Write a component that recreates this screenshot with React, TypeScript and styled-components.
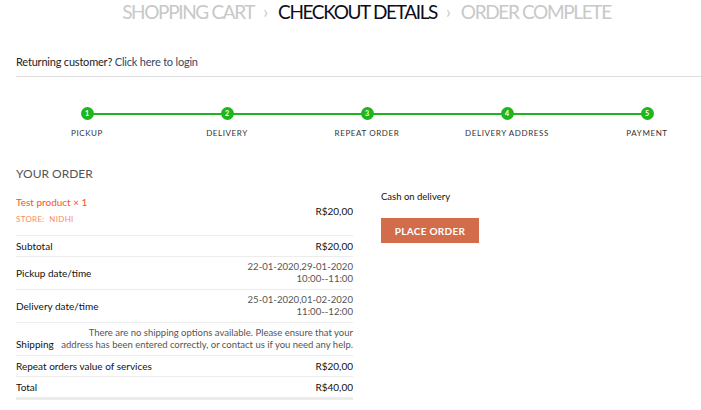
import React from 'react';
import styled, { createGlobalStyle } from 'styled-components';

const Global = createGlobalStyle`
  html, body { margin: 0; padding: 0; background: #fff; overflow: hidden; }
  body { font-family: Lato, "Open Sans", sans-serif; color: #333; }
`;

const Page = styled.div`
  width: 733px;
  box-sizing: border-box;
  padding: 0 16px;
`;

const Breadcrumb = styled.nav`
  display: flex;
  justify-content: center;
  align-items: center;
  font-size: 19px;
  line-height: 24px;
  text-transform: uppercase;
  letter-spacing: -1.35px;
`;

const Crumb = styled.span<{ $active?: boolean }>`
  color: ${(p) => (p.$active ? '#0d0d1a' : '#c8c8c8')};
`;

const Divider = styled.span`
  color: #c8c8c8;
  margin: 0 10px 0 9px;
  font-size: 17px;
  letter-spacing: 0;
`;

const LoginBar = styled.div`
  margin-top: 31px;
  padding-bottom: 7px;
  border-bottom: 1px solid #ddd;
  font-size: 11px;
  line-height: 14px;
  letter-spacing: -0.2px;
  color: #222;
  margin-right: -32px;
`;

const LoginLink = styled.a`
  color: #334862;
  text-decoration: none;
`;

const Steps = styled.ol`
  list-style: none;
  margin: 30px 0 0;
  padding: 0 0 0 1px;
  display: grid;
  grid-template-columns: repeat(5, 140px);
`;

const Step = styled.li<{ $first?: boolean; $last?: boolean }>`
  position: relative;
  display: flex;
  flex-direction: column;
  align-items: center;
  &::before, &::after {
    content: '';
    position: absolute;
    top: 6px;
    height: 1.5px;
    background: #1fb31f;
    width: 50%;
  }
  &::before { left: 0; display: ${(p) => (p.$first ? 'none' : 'block')}; }
  &::after { right: 0; display: ${(p) => (p.$last ? 'none' : 'block')}; }
`;

const Dot = styled.span`
  position: relative;
  z-index: 1;
  width: 13px;
  height: 13px;
  border-radius: 50%;
  background: #1fb51f;
  color: #fff;
  font-size: 7px;
  font-weight: 700;
  line-height: 13px;
  text-align: center;
`;

const StepLabel = styled.span`
  margin-top: 8px;
  font-size: 8px;
  line-height: 10px;
  letter-spacing: 0.6px;
  color: #333;
  text-transform: uppercase;
`;

const Columns = styled.div`
  margin-top: 28px;
  display: grid;
  grid-template-columns: 337px 1fr;
  column-gap: 28px;
`;

const Heading = styled.h3`
  margin: 0;
  font-size: 12px;
  line-height: 16px;
  font-weight: 400;
  color: #555;
  text-transform: uppercase;
`;

const Table = styled.div`
  margin-top: 7px;
  border-bottom: 3px solid #ececec;
  font-size: 10px;
  color: #111;
`;

const Row = styled.div<{ $align?: string }>`
  display: flex;
  justify-content: space-between;
  align-items: ${(p) => p.$align || 'center'};
  padding: 4px 0;
  line-height: 12px;
  border-top: 1px solid #ececec;
  &:first-child { border-top: none; padding: 6px 0 9px; }
`;

const Label = styled.span`
  color: #111;
  white-space: nowrap;
`;

const ShipLabel = styled(Label)`
  margin-bottom: 1px;
`;

const Value = styled.span`
  text-align: right;
  color: #111;
`;

const Muted = styled.span`
  text-align: right;
  color: #555;
  font-size: 9.6px;
`;

const ShipNote = styled.span`
  text-align: right;
  color: #555;
  font-size: 9.5px;
  line-height: 12px;
  white-space: nowrap;
`;

const Product = styled.div`
  display: flex;
  flex-direction: column;
`;

const ProductName = styled.span`
  color: #ff4f23;
  font-size: 10px;
  line-height: 14px;
`;

const Store = styled.span`
  margin-top: 3px;
  color: #ff8a5c;
  font-size: 8px;
  line-height: 14px;
  letter-spacing: 0.3px;
`;

const Payment = styled.div`
  padding-top: 25px;
  display: flex;
  flex-direction: column;
  align-items: flex-start;
`;

const PayMethod = styled.div`
  font-size: 9.5px;
  line-height: 12px;
  color: #111;
`;

const PlaceButton = styled.button`
  margin-top: 15px;
  width: 98px;
  height: 25px;
  border: none;
  background: #d26c4a;
  color: #fff;
  font-family: Lato, "Open Sans", sans-serif;
  font-weight: 700;
  font-size: 10px;
  letter-spacing: 0.3px;
  text-transform: uppercase;
  padding: 0;
`;

const steps = ['Pickup', 'Delivery', 'Repeat order', 'Delivery address', 'Payment'];

export default function App() {
  return (
    <Page>
      <Global />
      <Breadcrumb>
        <Crumb>Shopping Cart</Crumb>
        <Divider>›</Divider>
        <Crumb $active>Checkout details</Crumb>
        <Divider>›</Divider>
        <Crumb>Order Complete</Crumb>
      </Breadcrumb>
      <LoginBar>
        Returning customer? <LoginLink href="#">Click here to login</LoginLink>
      </LoginBar>
      <Steps>
        {steps.map((s, i) => (
          <Step key={s} $first={i === 0} $last={i === steps.length - 1}>
            <Dot>{i + 1}</Dot>
            <StepLabel>{s}</StepLabel>
          </Step>
        ))}
      </Steps>
      <Columns>
        <div>
          <Heading>Your order</Heading>
          <Table>
            <Row>
              <Product>
                <ProductName>Test product ×&nbsp;1</ProductName>
                <Store>STORE:&nbsp; NIDHI</Store>
              </Product>
              <Value>R$20,00</Value>
            </Row>
            <Row>
              <Label>Subtotal</Label>
              <Value>R$20,00</Value>
            </Row>
            <Row>
              <Label>Pickup date/time</Label>
              <Muted>22-01-2020,29-01-2020<br />10:00--11:00</Muted>
            </Row>
            <Row>
              <Label>Delivery date/time</Label>
              <Muted>25-01-2020,01-02-2020<br />11:00--12:00</Muted>
            </Row>
            <Row $align="flex-end">
              <ShipLabel>Shipping</ShipLabel>
              <ShipNote>
                There are no shipping options available. Please ensure that your
                <br />
                address has been entered correctly, or contact us if you need any help.
              </ShipNote>
            </Row>
            <Row>
              <Label>Repeat orders value of services</Label>
              <Value>R$20,00</Value>
            </Row>
            <Row>
              <Label>Total</Label>
              <Value>R$40,00</Value>
            </Row>
          </Table>
        </div>
        <Payment>
          <PayMethod>Cash on delivery</PayMethod>
          <PlaceButton>Place order</PlaceButton>
        </Payment>
      </Columns>
    </Page>
  );
}
